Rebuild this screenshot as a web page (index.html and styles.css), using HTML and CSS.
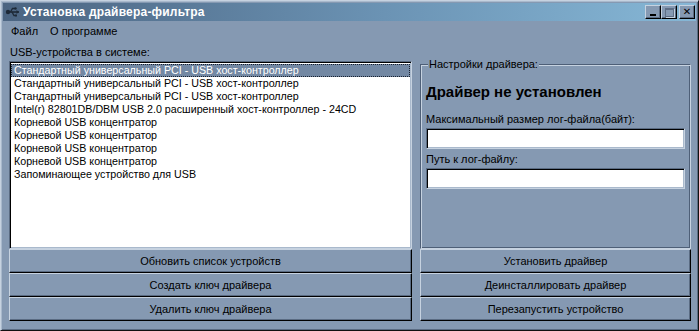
FILE: index.html
```html
<!DOCTYPE html>
<html lang="ru">
<head>
    <meta charset="UTF-8">
    <title>Установка драйвера-фильтра</title>
    <link rel="stylesheet" href="styles.css">
</head>
<body>
    <div class="window">
        <div class="titlebar">
            <svg class="app-icon" width="16" height="16" viewBox="0 0 16 16">
                <circle cx="3" cy="8" r="2.2" fill="#1e2a38"/>
                <path d="M3 8 H14" stroke="#1e2a38" stroke-width="1.6"/>
                <path d="M14 8 L11.5 6 V10 Z" fill="#1e2a38"/>
                <path d="M5.5 8 L7.5 4.5 H10" stroke="#1e2a38" stroke-width="1.4" fill="none"/>
                <circle cx="10.5" cy="4.5" r="1.2" fill="#1e2a38"/>
                <path d="M7 8 L9 11.5 H10.5" stroke="#1e2a38" stroke-width="1.4" fill="none"/>
                <rect x="10" y="10.5" width="2" height="2" fill="#1e2a38"/>
            </svg>
            <span class="title">Установка драйвера-фильтра</span>
            <div class="caption-buttons">
                <button class="cap-btn"><span class="glyph-min"></span></button>
                <button class="cap-btn disabled"><span class="glyph-max"></span></button>
                <button class="cap-btn close">&#10005;</button>
            </div>
        </div>

        <div class="menubar">
            <span class="menu-item">Файл</span>
            <span class="menu-item">О программе</span>
        </div>

        <div class="client">
            <div class="column left">
                <div class="caption">USB-устройства в системе:</div>
                <ul class="listbox">
                    <li class="selected">Стандартный универсальный PCI - USB хост-контроллер</li>
                    <li>Стандартный универсальный PCI - USB хост-контроллер</li>
                    <li>Стандартный универсальный PCI - USB хост-контроллер</li>
                    <li>Intel(r) 82801DB/DBM USB 2.0 расширенный хост-контроллер - 24CD</li>
                    <li>Корневой USB концентратор</li>
                    <li>Корневой USB концентратор</li>
                    <li>Корневой USB концентратор</li>
                    <li>Корневой USB концентратор</li>
                    <li>Запоминающее устройство для USB</li>
                </ul>
                <button class="btn">Обновить список устройств</button>
                <button class="btn">Создать ключ драйвера</button>
                <button class="btn">Удалить ключ драйвера</button>
            </div>

            <div class="column right">
                <fieldset class="group">
                    <legend>Настройки драйвера:</legend>
                    <div class="status">Драйвер не установлен</div>
                    <label class="field-label" for="logSize">Максимальный размер лог-файла(байт):</label>
                    <input class="field" type="text" id="logSize">
                    <label class="field-label" for="logPath">Путь к лог-файлу:</label>
                    <input class="field" type="text" id="logPath">
                </fieldset>
                <button class="btn">Установить драйвер</button>
                <button class="btn">Деинсталлировать драйвер</button>
                <button class="btn">Перезапустить устройство</button>
            </div>
        </div>
    </div>
</body>
</html>
```

FILE: styles.css
```css
body {
    margin: 0;
    padding: 0;
    background-color: #8599b2;
    font-family: "Liberation Sans", Arial, sans-serif;
    font-size: 11px;
    color: #000;
    overflow: hidden;
}
.window {
    width: 699px;
    height: 331px;
    box-sizing: border-box;
    background-color: #8599b2;
    border: 1px solid;
    border-color: #c6d2e0 #111 #111 #c6d2e0;
    box-shadow: inset 1px 1px #a9b9cc, inset -1px -1px #5a6b82;
    display: flex;
    flex-direction: column;
}
.titlebar {
    height: 18px;
    margin: 2px 2px 0 2px;
    display: flex;
    align-items: center;
    background: linear-gradient(to right, #4b6481, #6b93b4 55%, #86b7d6);
}
.app-icon {
    margin: 0 2px 0 2px;
}
.title {
    color: #fff;
    font-weight: bold;
    font-size: 12px;
    letter-spacing: 0.2px;
    flex: 1;
}
.caption-buttons {
    display: flex;
    margin-right: 1px;
}
.cap-btn {
    width: 16px;
    height: 14px;
    padding: 0;
    background-color: #8599b2;
    border: 1px solid;
    border-color: #c6d2e0 #000 #000 #c6d2e0;
    box-shadow: inset -1px -1px #5a6b82;
    display: flex;
    align-items: center;
    justify-content: center;
    font-size: 10px;
    font-weight: bold;
    line-height: 1;
    color: #000;
}
.cap-btn.close {
    margin-left: 2px;
    font-family: "DejaVu Sans", sans-serif;
}
.glyph-min {
    width: 6px;
    height: 2px;
    background: #000;
    margin-top: 6px;
}
.glyph-max {
    width: 7px;
    height: 6px;
    border: 1px solid #5f6f86;
    border-top-width: 2px;
    box-shadow: 1px 1px #c6d2e0;
}
.menubar {
    height: 19px;
    display: flex;
    align-items: center;
    gap: 12px;
    padding-left: 10px;
    font-size: 11px;
}
.client {
    flex: 1;
    display: grid;
    grid-template-columns: 403px 271px;
    column-gap: 8px;
    padding: 0 0 9px 8px;
    min-height: 0;
}
.column {
    display: flex;
    flex-direction: column;
    min-height: 0;
}
.caption {
    height: 17px;
    padding-left: 1px;
    line-height: 17px;
    margin-top: 4px;
}
.listbox {
    list-style: none;
    margin: 0;
    padding: 2px 1px;
    flex: 1;
    box-sizing: border-box;
    background: #fff;
    border: 1px solid;
    border-color: #5a6b82 #c6d2e0 #c6d2e0 #5a6b82;
    box-shadow: inset 1px 1px #000, inset -1px -1px #a9b9cc;
    overflow: hidden;
    font-size: 10.7px;
}
.listbox li {
    height: 13px;
    line-height: 13px;
    padding-left: 3px;
    white-space: nowrap;
}
.listbox li.selected {
    background: #7388a3;
    color: #fff;
    outline: 1px dotted #1a2230;
    outline-offset: -1px;
}
.btn {
    height: 24px;
    flex-shrink: 0;
    padding: 0;
    font-family: inherit;
    font-size: 11px;
    color: #000;
    background-color: #8599b2;
    border: 1px solid;
    border-color: #c6d2e0 #000 #000 #c6d2e0;
    box-shadow: inset -1px -1px #5a6b82;
    text-align: center;
}
.group {
    flex: 1;
    margin: 18px 0 0 0;
    padding: 12px 5px 0 5px;
    min-height: 0;
    border: 1px solid;
    border-color: #4e5f77 #c6d2e0 #c6d2e0 #4e5f77;
    box-shadow: inset 1px 1px #c6d2e0, inset -1px -1px #4e5f77;
    display: flex;
    flex-direction: column;
}
.group legend {
    padding: 0 1px;
    margin-left: 2px;
    background-color: #8599b2;
    line-height: 13px;
}
.status {
    font-size: 15px;
    font-weight: bold;
    height: 18px;
    line-height: 18px;
    margin-bottom: 11px;
}
.field-label {
    height: 14px;
    line-height: 14px;
    margin-bottom: 2px;
}
.field {
    height: 21px;
    flex-shrink: 0;
    box-sizing: border-box;
    margin: 0 0 3px 0;
    padding: 0 3px;
    font-family: inherit;
    font-size: 11px;
    background: #fff;
    border: 1px solid;
    border-color: #5a6b82 #c6d2e0 #c6d2e0 #5a6b82;
    box-shadow: inset 1px 1px #000, inset -1px -1px #a9b9cc;
    outline: none;
}
```
